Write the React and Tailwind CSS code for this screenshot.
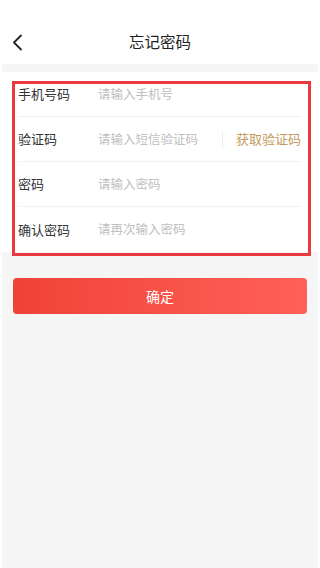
const FONT = { fontFamily: '"Noto Sans CJK SC", "Noto Sans", sans-serif' };

const ROWS = [
  { label: "手机号码", placeholder: "请输入手机号" },
  { label: "验证码", placeholder: "请输入短信验证码", code: true },
  { label: "密码", placeholder: "请输入密码" },
  { label: "确认密码", placeholder: "请再次输入密码" },
];

function Row({ label, placeholder, code, last }) {
  return (
    <div className={`flex h-[45px] items-center ${last ? "" : "border-b border-[#f2f2f2]"}`}>
      <span className="w-[80px] text-[13px] text-[#333]">{label}</span>
      <span className="flex-1 text-[12.5px] text-[#c0c0c0]">{placeholder}</span>
      {code && (
        <>
          <span className="mr-[13px] h-[17px] w-px bg-[#eeeeee]" />
          <span className="text-[13px] text-[#c49a5c]">获取验证码</span>
        </>
      )}
    </div>
  );
}

export default function App() {
  return (
    <div className="relative min-h-[568px] bg-white" style={FONT}>
      {/* Header */}
      <div className="relative flex h-[64px] items-end bg-white">
        <div className="flex h-[44px] w-full items-center justify-center">
          <svg className="absolute left-[12px] top-[34px]" width="12" height="17" viewBox="0 0 12 17">
            <path d="M9 1.5 L2 8.5 L9 15.5" fill="none" stroke="#222" strokeWidth="1.8" strokeLinecap="round" strokeLinejoin="round" />
          </svg>
          <span className="text-[15.5px] text-[#222]">忘记密码</span>
        </div>
      </div>

      <div className="mx-[2px] min-h-[504px] bg-[#f5f5f5] pt-[8px]">
        {/* Form card */}
        <div className="bg-white pl-[16px] pr-[17px]">
          {ROWS.map((r, i) => (
            <Row key={r.label} {...r} last={i === ROWS.length - 1} />
          ))}
        </div>

        {/* Submit */}
        <div className="pl-[11px] pr-[11px] pt-[26px]">
          <button className="h-[36px] w-full rounded-[4px] bg-gradient-to-r from-[#f04236] to-[#ff6058] text-[14px] text-white">
            确定
          </button>
        </div>
      </div>

      {/* annotation box */}
      <div className="pointer-events-none absolute left-[12px] top-[81px] h-[175px] w-[299px] border-[3px] border-[#e83a3f]" />
    </div>
  );
}
